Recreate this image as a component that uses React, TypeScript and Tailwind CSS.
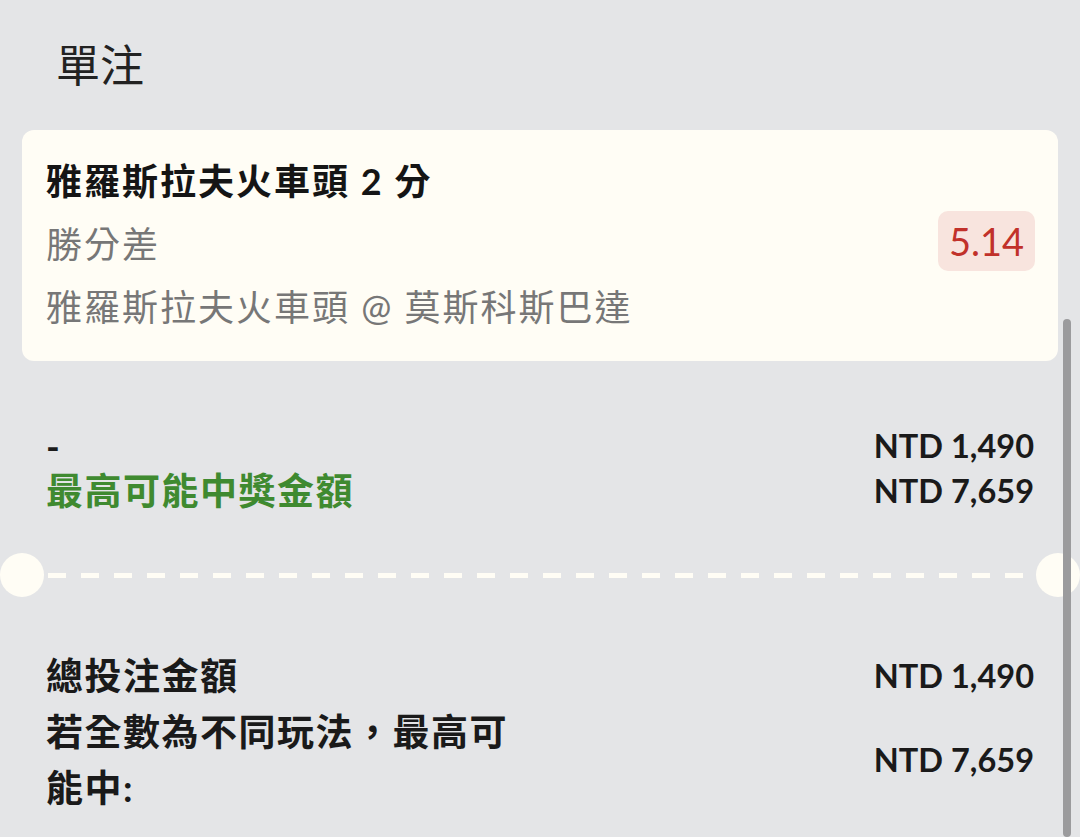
export default function App() {
  return (
    <div className="relative min-h-[837px] overflow-hidden bg-[#e4e5e7] font-[Lato,'Noto_Sans_CJK_TC',sans-serif] text-[#1a1a1a]">
      <h1 className="pl-[56px] pt-[37px] text-[44px] leading-[56px] font-normal text-[#222]">單注</h1>

      <div className="mx-[22px] mt-[37px] flex items-center justify-between rounded-xl bg-[#fffdf5] pl-6 pr-[23px] pt-[20px] pb-[22px]">
        <div className="text-[36px] leading-[63px] tracking-[2px]">
          <div className="font-bold text-[#151515]">雅羅斯拉夫火車頭 2 分</div>
          <div className="text-[#777]">勝分差</div>
          <div className="text-[#777]">雅羅斯拉夫火車頭 @ 莫斯科斯巴達</div>
        </div>
        <div className="-mt-2 rounded-[10px] bg-[#f8e4de] px-[11px] text-[38px] leading-[60px] text-[#c1312a]">5.14</div>
      </div>

      <div className="mt-[62px] px-[46px] text-[37px] leading-[45px] font-bold tracking-[1.5px]">
        <div className="flex justify-between">
          <span>-</span>
          <span className="text-[32.5px] tracking-normal">NTD 1,490</span>
        </div>
        <div className="flex justify-between">
          <span className="text-[#3f8a30]">最高可能中獎金額</span>
          <span className="text-[32.5px] tracking-normal">NTD 7,659</span>
        </div>
      </div>

      <div className="mt-[40px] flex items-center justify-between">
        <div className="h-11 w-11 shrink-0 rounded-full bg-[#fffdf5]" />
        <div className="mx-1 h-[5px] flex-1 bg-[repeating-linear-gradient(90deg,#fffdf5_0_18px,transparent_18px_33px)]" />
        <div className="h-11 w-11 shrink-0 rounded-full bg-[#fffdf5]" />
      </div>

      <div className="mt-[51px] px-[46px] text-[37px] leading-[56px] font-bold tracking-[1.5px]">
        <div className="flex items-center justify-between">
          <span>總投注金額</span>
          <span className="text-[32.5px] tracking-normal">NTD 1,490</span>
        </div>
        <div className="flex items-center justify-between">
          <span className="max-w-[490px]">若全數為不同玩法，最高可能中:</span>
          <span className="text-[32.5px] tracking-normal">NTD 7,659</span>
        </div>
      </div>

      <div className="absolute bottom-0 right-[9px] top-[319px] w-2 rounded-full bg-[#9b9b9d]" />
    </div>
  );
}
